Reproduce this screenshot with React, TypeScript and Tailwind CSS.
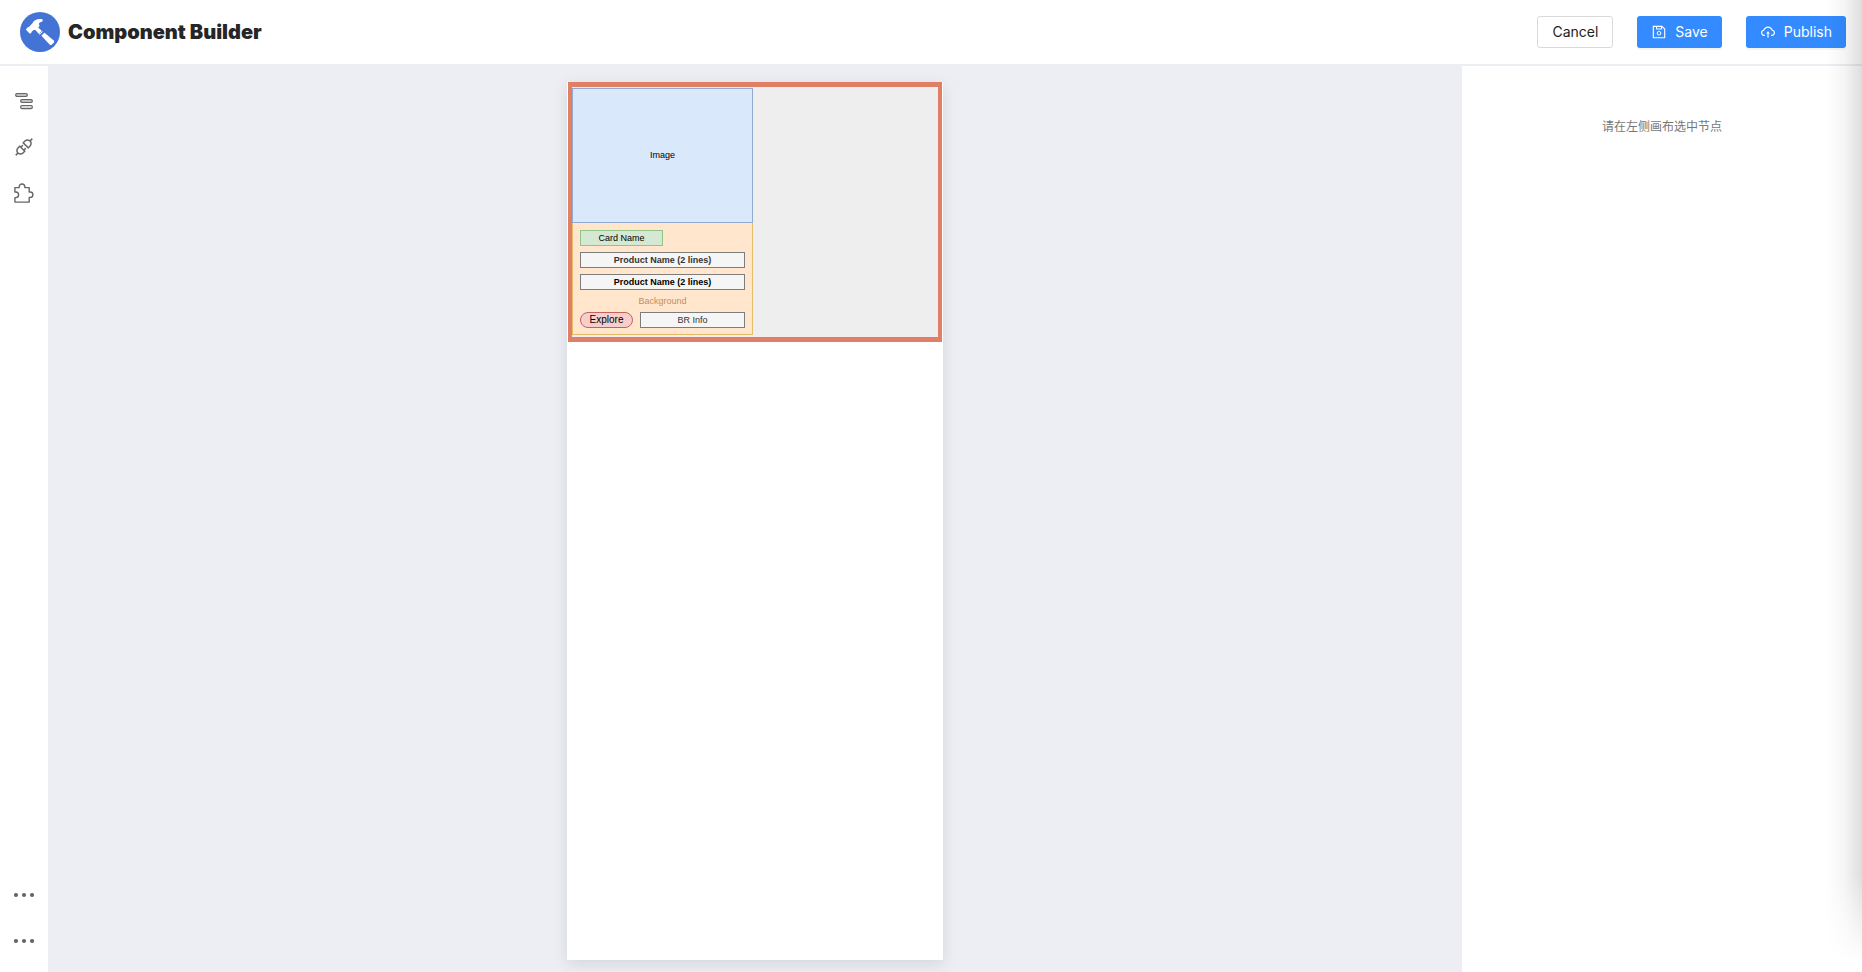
import type { ReactNode } from "react";
import { AiOutlineApi, AiOutlineCloudUpload, AiOutlineSave } from "react-icons/ai";

function Logo() {
  return (
    <svg viewBox="0 0 40 40" className="size-10" aria-hidden="true">
      <circle cx="20" cy="20" r="20" fill="#4373d4" />
      <g fill="#fff">
        <path d="M5.8 17.6 L8 14.9 L8.9 15.1 L12.4 11.2 C13.8 7.8 18.4 6 22.7 7.4 V8.6 L21.8 10 C20.4 9.8 19.2 10.6 18.8 12 L19.6 13.8 L18.2 15.4 L22.8 19.8 L19.6 22.8 L15.4 18 L13.6 18 L11.4 20 L11.5 20.8 L9.8 21.8 Z" />
        <path d="M24.3 20.4 L33.7 28.4 Q34.7 29.4 33.9 30.4 L31.7 32.7 Q30.6 33.5 29.6 32.5 L21.2 23.4 Z" />
      </g>
      <path d="M19.4 21.6 L22.2 18.8 M21 23.8 L24.6 20.2" stroke="#4373d4" strokeWidth="0.6" />
    </svg>
  );
}

function OutlineTreeIcon() {
  return (
    <svg viewBox="0 0 20 20" className="size-5" fill="none" stroke="#666" strokeWidth="1.3" aria-hidden="true">
      <rect x="1.7" y="2.7" width="11.6" height="2.6" rx="1.3" fill="#ddd" />
      <rect x="6.7" y="8.7" width="11.6" height="2.6" rx="1.3" fill="#ddd" />
      <rect x="6.7" y="14.7" width="11.6" height="2.8" rx="1.3" />
    </svg>
  );
}

function PuzzleIcon() {
  return (
    <svg viewBox="0 0 20 20" className="size-5" fill="none" stroke="#666" strokeWidth="1.4" strokeLinejoin="round" aria-hidden="true">
      <path d="M0.9 4.6 H5.2 V3.8 A2.8 2.8 0 0 1 10.8 3.8 V4.6 H15.2 V9 H16.2 A2.7 2.7 0 0 1 16.2 14.4 H15.2 V19.1 H0.9 V14.6 H1.8 A2.8 2.8 0 0 0 1.8 9 H0.9 Z" />
    </svg>
  );
}

function MoreIcon() {
  return (
    <svg viewBox="0 0 20 20" className="size-5" fill="#666" aria-hidden="true">
      <circle cx="2" cy="10" r="2.1" />
      <circle cx="10" cy="10" r="2.1" />
      <circle cx="18" cy="10" r="2.1" />
    </svg>
  );
}

function RailButton({ label, children }: { label: string; children: ReactNode }) {
  return (
    <button type="button" aria-label={label} className="flex h-[46px] w-full items-center justify-center text-[#666]">
      {children}
    </button>
  );
}

function CardPreview() {
  return (
    <div className="flex w-[181px] flex-col text-center font-['Liberation_Sans',sans-serif] text-[9px] text-black">
      <div className="flex h-[135px] items-center justify-center border border-[#92a9d0] bg-[#dae8fc]">
        Image
      </div>
      <div className="flex flex-col gap-1.5 border border-t-0 border-[#e3bd6a] bg-[#ffe6cc] px-[7px] pb-1.5 pt-[7px]">
        <div className="h-4 w-[83px] border border-[#93c385] bg-[#d5e8d4] leading-[14px]">Card Name</div>
        <div className="h-4 border border-[#7d7d7d] bg-[#f5f5f5] font-bold leading-[14px] text-[#333]">
          Product Name (2 lines)
        </div>
        <div className="h-4 border border-[#7d7d7d] bg-[#f5f5f5] font-bold leading-[14px]">
          Product Name (2 lines)
        </div>
        <div className="h-2.5 leading-[10px] text-[#c38d60]">Background</div>
        <div className="flex gap-[7px]">
          <div className="h-4 w-[53px] rounded-full border border-[#c4625e] bg-[#f8cecc] text-[10px] leading-[14px]">
            Explore
          </div>
          <div className="h-4 flex-1 border border-[#7d7d7d] bg-[#f5f5f5] leading-[14px] text-[#333]">BR Info</div>
        </div>
      </div>
    </div>
  );
}

const primaryButton =
  "flex h-8 items-center gap-2 rounded-[3px] bg-[#338bff] px-3.5 text-sm text-white shadow-[0_2px_0_rgba(0,0,0,0.04)]";

export default function App() {
  return (
    <div className="relative flex h-screen flex-col overflow-hidden bg-white font-[Inter,'Noto_Sans_CJK_SC',sans-serif] text-[#222]">
      <header className="flex h-[66px] shrink-0 items-center justify-between border-b-2 border-[#edeef3] pl-5 pr-4">
        <div className="flex items-center gap-2">
          <Logo />
          <h1 className="text-xl font-black text-[#262626]">Component Builder</h1>
        </div>
        <div className="flex items-center gap-6">
          <button type="button" className="h-8 rounded-[3px] border border-[#d9d9d9] bg-white px-3.5 text-sm">
            Cancel
          </button>
          <button type="button" className={primaryButton}>
            <AiOutlineSave className="size-4" />
            Save
          </button>
          <button type="button" className={primaryButton}>
            <AiOutlineCloudUpload className="size-4" />
            Publish
          </button>
        </div>
      </header>

      <div className="flex min-h-0 flex-1">
        <nav className="flex w-12 shrink-0 flex-col justify-between pb-2 pt-3">
          <div>
            <RailButton label="Outline">
              <OutlineTreeIcon />
            </RailButton>
            <RailButton label="Data sources">
              <AiOutlineApi className="size-[22px]" />
            </RailButton>
            <RailButton label="Components">
              <PuzzleIcon />
            </RailButton>
          </div>
          <div>
            <RailButton label="More">
              <MoreIcon />
            </RailButton>
            <RailButton label="More settings">
              <MoreIcon />
            </RailButton>
          </div>
        </nav>

        <main className="flex min-w-0 flex-1 justify-center bg-[#edeef3] pb-3 pt-4">
          <div className="w-[376px] bg-white px-px shadow-[0_4px_14px_rgba(31,60,80,0.13)]">
            <div className="border-x-4 border-y-5 border-[#e17f66] bg-[#eee] pb-0.5 pt-px">
              <CardPreview />
            </div>
          </div>
        </main>

        <aside className="w-[400px] shrink-0 bg-white pt-[51px] text-center">
          <p className="text-xs leading-5 text-[#777]">请在左侧画布选中节点</p>
        </aside>
      </div>

      <div className="pointer-events-none absolute inset-y-0 right-0 w-9 bg-linear-to-l from-black/13 via-black/4 to-transparent mask-b-from-90% mask-b-to-99%" />
    </div>
  );
}
